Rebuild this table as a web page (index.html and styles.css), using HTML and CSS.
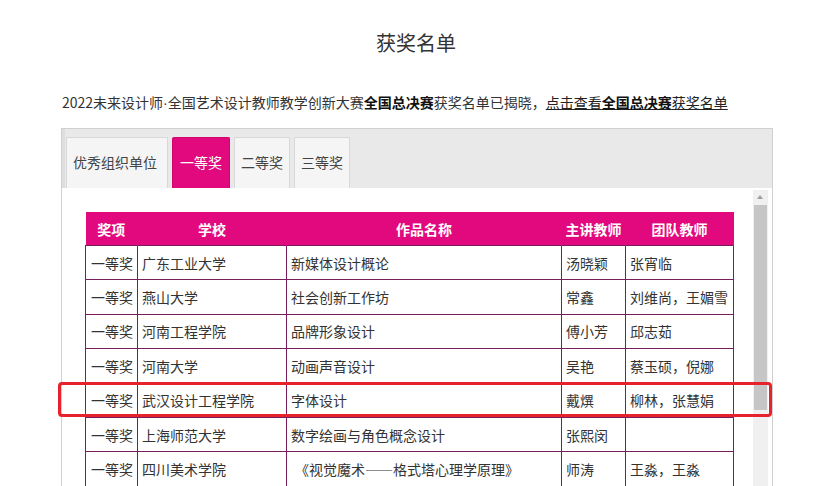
FILE: index.html
```html
<!DOCTYPE html>
<html lang="zh-CN">
<head>
<meta charset="utf-8">
<title>获奖名单</title>
<link rel="stylesheet" href="styles.css">
</head>
<body>
<div class="page">
  <h1 class="title">获奖名单</h1>
  <p class="intro">2022未来设计师<span class="dot">·</span>全国艺术设计教师教学创新大赛<b>全国总决赛</b>获奖名单已揭晓，<a class="link" href="#">点击查看<b>全国总决赛</b>获奖名单</a></p>
  <div class="box">
    <div class="tabbar">
      <div class="tab">优秀组织单位</div>
      <div class="tab active">一等奖</div>
      <div class="tab">二等奖</div>
      <div class="tab">三等奖</div>
    </div>
    <div class="content">
      <div class="tablewrap">
        <table class="awards">
          <colgroup>
            <col class="c1"><col class="c2"><col class="c3"><col class="c4"><col class="c5">
          </colgroup>
          <thead>
            <tr><th>奖项</th><th>学校</th><th>作品名称</th><th>主讲教师</th><th>团队教师</th></tr>
          </thead>
          <tbody>
            <tr><td>一等奖</td><td>广东工业大学</td><td>新媒体设计概论</td><td>汤晓颖</td><td>张宵临</td></tr>
            <tr><td>一等奖</td><td>燕山大学</td><td>社会创新工作坊</td><td>常鑫</td><td>刘维尚，王媚雪</td></tr>
            <tr><td>一等奖</td><td>河南工程学院</td><td>品牌形象设计</td><td>傅小芳</td><td>邱志茹</td></tr>
            <tr><td>一等奖</td><td>河南大学</td><td>动画声音设计</td><td>吴艳</td><td>蔡玉硕，倪娜</td></tr>
            <tr><td>一等奖</td><td>武汉设计工程学院</td><td>字体设计</td><td>戴熼</td><td>柳林，张慧娟</td></tr>
            <tr><td>一等奖</td><td>上海师范大学</td><td>数字绘画与角色概念设计</td><td>张熙闵</td><td></td></tr>
            <tr><td>一等奖</td><td>四川美术学院</td><td class="quote">《视觉魔术——格式塔心理学原理》</td><td>师涛</td><td>王淼，王淼</td></tr>
          </tbody>
        </table>
      </div>
      <div class="scrollbar">
        <div class="arrow"></div>
        <div class="thumb"></div>
      </div>
    </div>
    <div class="highlight"></div>
  </div>
</div>
</body>
</html>
```

FILE: styles.css
```css
html, body {
  margin: 0;
  padding: 0;
  background: #ffffff;
}
body {
  font-family: "Noto Sans CJK SC", "Microsoft YaHei", sans-serif;
  color: #333333;
  font-size: 14px;
  overflow: hidden;
  height: 486px;
}
.page {
  width: 832px;
}
.title {
  margin: 0;
  padding-top: 28px;
  height: 30px;
  line-height: 30px;
  font-size: 20px;
  font-weight: normal;
  text-align: center;
  color: #333;
}
.intro {
  margin: 0;
  padding-top: 32px;
  padding-left: 62px;
  height: 24px;
  line-height: 24px;
  font-size: 14px;
  color: #333;
  white-space: nowrap;
}
.intro .dot {
  font-family: "Liberation Sans", sans-serif;
}
.intro b {
  color: #111;
}
.link {
  color: #222;
  text-decoration: underline;
}
.box {
  position: relative;
  margin-top: 14px;
  margin-left: 61px;
  width: 710px;
  border: 1px solid #d0d0d0;
  border-bottom: none;
  height: 400px;
}
.tabbar {
  background: #e9e9e9;
  height: 51px;
  padding-top: 8px;
  padding-left: 1px;
  display: flex;
  gap: 4px;
  border-left: 3px solid #dedede;
}
.tab {
  height: 51px;
  line-height: 49px;
  padding: 0 6px;
  box-sizing: border-box;
  background: #f5f5f5;
  border: 1px solid #d8d8d8;
  border-bottom: none;
  color: #444;
  font-size: 14px;
}
.tab:first-child {
  width: 102px;
}
.tab.active {
  background: #e2097e;
  border-color: #d0066f;
  color: #fff;
  border-radius: 2px 2px 0 0;
  width: 58px;
  text-align: center;
  padding: 0;
}
.tab:nth-child(3), .tab:nth-child(4) {
  width: 56px;
  text-align: center;
  padding: 0;
}
.content {
  display: flex;
  background: #fff;
  height: 300px;
}
.tablewrap {
  flex: 1;
  padding-top: 24px;
  padding-left: 23px;
}
.awards {
  border-collapse: collapse;
  width: 648px;
  table-layout: fixed;
  font-size: 14px;
}
.c1 { width: 52px; }
.c2 { width: 149px; }
.c3 { width: 275px; }
.c4 { width: 64px; }
.c5 { width: 108px; }
.awards th {
  background: #e2097e;
  color: #fff;
  font-weight: bold;
  height: 33px;
  padding: 0;
  text-align: center;
  border: none;
  border-right: 1px solid #e2097e;
}
.awards td {
  border: 1px solid #7a1d5e;
  height: 33.4px;
  padding: 0 4px;
  text-align: left;
  color: #333;
  white-space: nowrap;
  overflow: hidden;
}
.awards td:first-child {
  padding: 0 2px 0 5px;
}
.awards td.quote {
  padding-left: 8px;
}
.scrollbar {
  width: 15px;
  margin-right: 4px;
  margin-top: 2px;
  background: #f0f0f0;
  display: flex;
  flex-direction: column;
}
.arrow {
  height: 15px;
  position: relative;
  background: #f0f0f0;
}
.arrow::after {
  content: "";
  position: absolute;
  left: 4px;
  top: 5px;
  border-left: 3px solid transparent;
  border-right: 3px solid transparent;
  border-bottom: 4px solid #a0a0a0;
}
.thumb {
  height: 205px;
  margin: 0 1px;
  background: #c6c6c6;
}
.highlight {
  position: absolute;
  left: -4px;
  top: 253px;
  width: 708px;
  height: 29px;
  border: 3px solid #e8222a;
  border-radius: 4px;
  pointer-events: none;
}
```
